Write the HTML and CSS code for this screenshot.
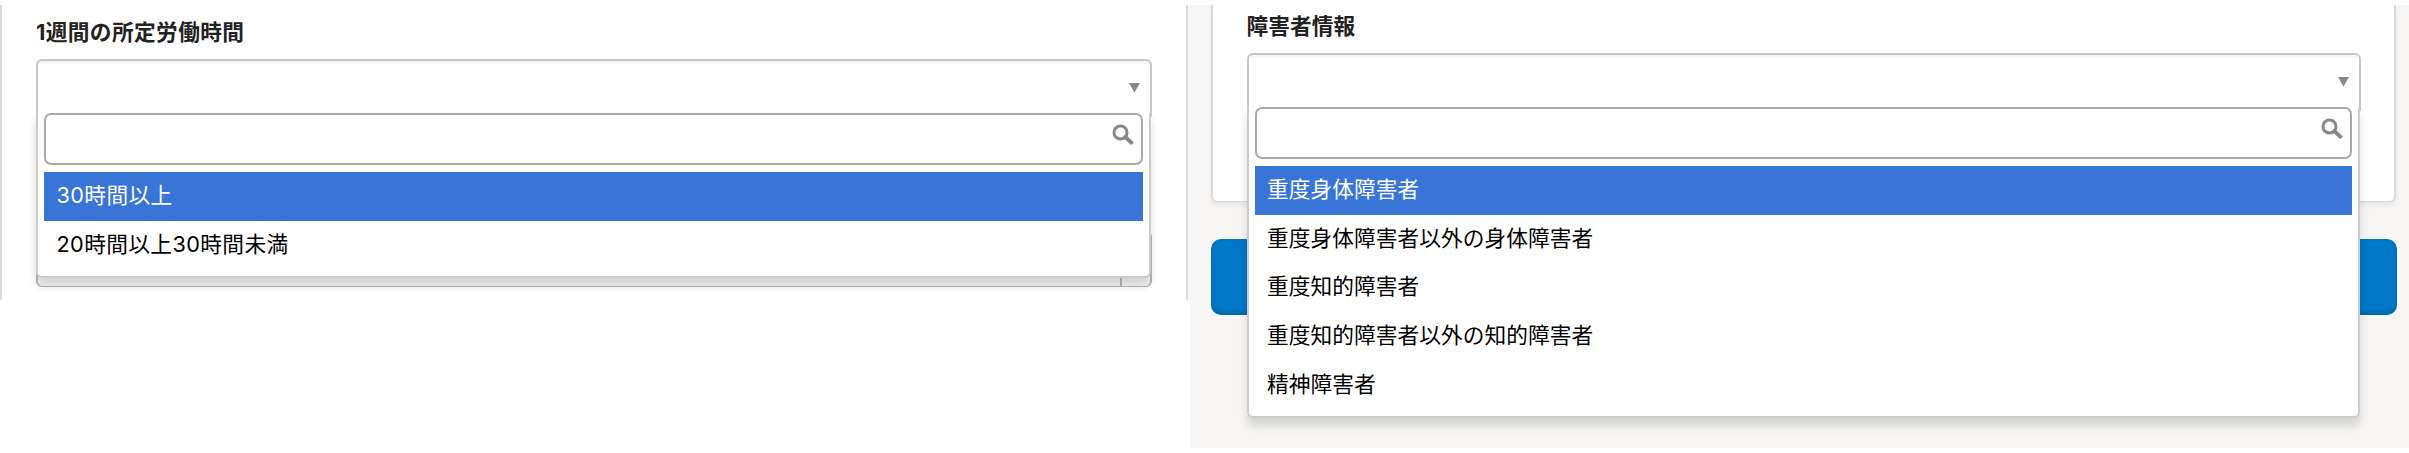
FILE: index.html
```
<!DOCTYPE html>
<html lang="ja">
<head>
<meta charset="utf-8">
<title>従業員情報</title>
<link rel="stylesheet" href="styles.css">
</head>
<body>
<main class="page">
  <section class="panel panel-hours">
    <div class="card card-hours">
      <h2 class="label">1週間の所定労働時間</h2>
      <div class="field">
        <div class="select"><span class="arrow"></span></div>
        <div class="next-select"><span class="next-divider"></span></div>
        <div class="dropdown">
          <div class="search">
            <svg class="search-icon" viewBox="0 0 22 22"><circle cx="8.5" cy="8.5" r="6.5" fill="none" stroke="#888" stroke-width="3"/><path d="M13.5 13.2L19.3 18.6" stroke="#888" stroke-width="4" stroke-linecap="round"/></svg>
          </div>
          <ul class="options">
            <li class="option active">30時間以上</li>
            <li class="option">20時間以上30時間未満</li>
          </ul>
        </div>
      </div>
    </div>
  </section>
  <section class="panel panel-disability">
    <div class="card card-disability">
      <h2 class="label">障害者情報</h2>
      <div class="field">
        <div class="select"><span class="arrow"></span></div>
        <div class="dropdown">
          <div class="search">
            <svg class="search-icon" viewBox="0 0 22 22"><circle cx="8.5" cy="8.5" r="6.5" fill="none" stroke="#888" stroke-width="3"/><path d="M13.5 13.2L19.3 18.6" stroke="#888" stroke-width="4" stroke-linecap="round"/></svg>
          </div>
          <ul class="options">
            <li class="option active">重度身体障害者</li>
            <li class="option">重度身体障害者以外の身体障害者</li>
            <li class="option">重度知的障害者</li>
            <li class="option">重度知的障害者以外の知的障害者</li>
            <li class="option">精神障害者</li>
          </ul>
        </div>
      </div>
    </div>
    <div class="submit"></div>
  </section>
</main>
</body>
</html>
```
FILE: styles.css
```
* { box-sizing: border-box; }

body {
  margin: 0;
  background: #fff;
  color: #000;
  font-family: Inter, "Noto Sans CJK JP", sans-serif;
  font-size: 21.7px;
  overflow: hidden;
}

.page {
  display: flex;
  align-items: flex-start;
  height: 453px;
  padding-top: 5px;
}

.panel { background: #f7f6f5; }

.panel-hours {
  width: 1190px;
  height: 295px;
  padding-right: 2px;
  letter-spacing: .38px;
}

.panel-disability {
  width: 1219px;
  height: 443px;
  padding: 0 12px 0 21px;
  letter-spacing: .06px;
}

.card { background: #fff; }

.card-hours {
  height: 295px;
  padding: 9px 34px 0;
  border: solid #dcdcdc;
  border-width: 0 2px;
}

.card-disability {
  height: 197px;
  margin-right: 1px;
  padding: 3px 33px 0 33.5px;
  border: solid #dadada;
  border-width: 0 2px 1px;
  border-radius: 0 0 6px 6px;
  box-shadow: 0 4px 4px rgba(0, 0, 0, .05);
}

.label {
  height: 45px;
  margin: 0;
  color: #222;
  font-size: 21.7px;
  font-weight: 700;
  line-height: 36px;
}

.field {
  position: relative;
  height: 228px;
}

.select {
  display: flex;
  justify-content: flex-end;
  height: 58px;
  padding: 22px 10px 0;
  border: 2px solid #c8c8c8;
  border-bottom: 0;
  border-radius: 6px 6px 0 0;
  background: linear-gradient(#f2f2f2, #fff 4px);
}

.arrow {
  width: 11px;
  height: 9.5px;
  background: #888;
  clip-path: polygon(0 0, 100% 0, 50% 100%);
}

.next-select {
  display: flex;
  justify-content: flex-end;
  height: 56px;
  margin-top: 113.5px;
  padding-right: 28px;
  border: solid #b8b8b8;
  border-width: 1px 2px;
  border-radius: 6px;
  background: #f8f8f8;
}

.next-divider { border-left: 2px solid #b8b8b8; }

/* Menu laid over whatever follows the field */
.dropdown {
  position: absolute;
  z-index: 2;
  top: 54px;
  left: 0;
  right: 1px;
  padding: 0 6px 6.5px;
  border: 2px solid #ccc;
  border-top: 0;
  border-radius: 0 0 6px 6px;
  background: #fff;
  box-shadow: 0 8px 10px rgba(0, 0, 0, .14);
}

.search {
  display: flex;
  justify-content: flex-end;
  height: 52px;
  padding: 9px 7.5px 0;
  border: 2px solid #aaa;
  border-radius: 7px;
}

.search-icon {
  width: 22px;
  height: 22px;
}

.options {
  margin: 7px 0 0;
  padding: 0;
  list-style: none;
}

.option {
  height: 48.7px;
  padding-left: 12.5px;
  line-height: 46px;
}

.option.active {
  background: #3875d7;
  color: #fff;
}

.submit {
  height: 76px;
  margin-top: 37px;
  border-radius: 10px;
  background: #0077c7;
  box-shadow: inset 0 -3px 5px rgba(0, 0, 0, .14);
}
```
